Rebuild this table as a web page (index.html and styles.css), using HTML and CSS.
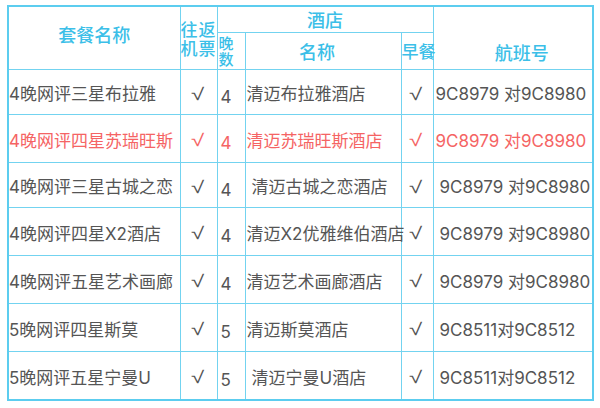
FILE: index.html
```html
<!DOCTYPE html>
<html lang="zh">
<head>
<meta charset="utf-8">
<link rel="stylesheet" href="styles.css">
</head>
<body>
<table class="plan">
  <colgroup>
    <col class="c-name"><col class="c-air"><col class="c-night"><col class="c-hotel"><col class="c-bf"><col class="c-flight">
  </colgroup>
  <thead>
    <tr class="h1">
      <th rowspan="2" class="th-name">套餐名称</th>
      <th rowspan="2" class="th-air">往返<br>机票</th>
      <th colspan="3" class="th-hotel">酒店</th>
      <th rowspan="2" class="th-flight">航班号</th>
    </tr>
    <tr class="h2">
      <th class="th-night">晚<br>数</th>
      <th class="th-hname">名称</th>
      <th class="th-bf">早餐</th>
    </tr>
  </thead>
  <tbody>
    <tr class="r-s">
      <td class="name">4晚网评三星布拉雅</td><td class="ck"><span class="tick">√</span></td><td class="n">4</td><td class="hotel">清迈布拉雅酒店</td><td class="ck"><span class="tick">√</span></td><td class="fl">9C8979 对9C8980</td>
    </tr>
    <tr class="r-t hot">
      <td class="name">4晚网评四星苏瑞旺斯</td><td class="ck"><span class="tick">√</span></td><td class="n">4</td><td class="hotel">清迈苏瑞旺斯酒店</td><td class="ck"><span class="tick">√</span></td><td class="fl">9C8979 对9C8980</td>
    </tr>
    <tr class="r-s">
      <td class="name">4晚网评三星古城之恋</td><td class="ck"><span class="tick">√</span></td><td class="n">4</td><td class="hotel ind">清迈古城之恋酒店</td><td class="ck"><span class="tick">√</span></td><td class="fl ind">9C8979 对9C8980</td>
    </tr>
    <tr class="r-t">
      <td class="name">4晚网评四星X2酒店</td><td class="ck"><span class="tick">√</span></td><td class="n">4</td><td class="hotel">清迈X2优雅维伯酒店</td><td class="ck"><span class="tick">√</span></td><td class="fl ind">9C8979 对9C8980</td>
    </tr>
    <tr class="r-t">
      <td class="name">4晚网评五星艺术画廊</td><td class="ck"><span class="tick">√</span></td><td class="n">4</td><td class="hotel">清迈艺术画廊酒店</td><td class="ck"><span class="tick">√</span></td><td class="fl ind">9C8979 对9C8980</td>
    </tr>
    <tr class="r-t">
      <td class="name">5晚网评四星斯莫</td><td class="ck"><span class="tick">√</span></td><td class="n">5</td><td class="hotel">清迈斯莫酒店</td><td class="ck"><span class="tick">√</span></td><td class="fl ind">9C8511对9C8512</td>
    </tr>
    <tr class="r-l">
      <td class="name">5晚网评五星宁曼U</td><td class="ck"><span class="tick">√</span></td><td class="n">5</td><td class="hotel ind">清迈宁曼U酒店</td><td class="ck"><span class="tick">√</span></td><td class="fl ind">9C8511对9C8512</td>
    </tr>
  </tbody>
</table>
</body>
</html>
```

FILE: styles.css
```css
html, body {
  background: #ffffff;
}
body {
  margin: 5px 0 0 7px;
  font-family: Inter, "Noto Sans CJK SC", sans-serif;
  color: #555555;
}
.plan {
  border-collapse: collapse;
  table-layout: fixed;
  width: 587px;
  border: 2px solid #5ccdef;
}
.c-name { width: 172px; }
.c-air { width: 37px; }
.c-night { width: 28px; }
.c-hotel { width: 156px; }
.c-bf { width: 32px; }
.c-flight { width: 160px; }

.plan th, .plan td {
  border: 1px solid #73d3f0;
  padding: 0;
  white-space: nowrap;
  overflow: visible;
}
.plan th {
  font-family: "Noto Sans CJK SC", sans-serif;
  font-weight: 500;
  color: #3cbfe8;
  font-size: 18px;
  line-height: 18px;
  text-align: center;
  vertical-align: middle;
}
.h1 { height: 26px; }
.h2 { height: 37px; }
.plan .th-name { padding-bottom: 7px; }
.plan .th-air { font-size: 17px; line-height: 19px; letter-spacing: 1px; padding-top: 1px; }
.plan .th-hotel { padding-top: 0; }
.plan .th-night {
  font-size: 15px;
  line-height: 16px;
  text-align: left;
  vertical-align: top;
  padding: 2px 0 0 1px;
}
.plan .th-hname { padding: 0 12px 0 0; }
.plan .th-bf { font-size: 17px; }
.plan .th-flight { vertical-align: bottom; padding: 0 0 8px 18px; }

.plan td {
  font-size: 17px;
  line-height: 20px;
  vertical-align: middle;
  padding-top: 5px;
}
.r-s { height: 45px; }
.r-t { height: 48px; }
.r-l { height: 49px; }

.plan .name { padding-left: 0; text-align: left; }
.plan .ck {
  text-align: center;
  padding-right: 3px;
}
.tick {
  display: inline-block;
  font-family: "Noto Sans", sans-serif;
  font-size: 20px;
  line-height: 20px;
  transform: scale(1.2, 0.85);
}
.plan .n { padding-left: 3px; padding-top: 10px; }
.plan .hotel { padding-left: 1px; }
.plan .hotel.ind { padding-left: 6px; }
.plan .fl { padding-left: 2px; }
.plan .fl.ind { padding-left: 6px; }

.plan .hot td { color: #f56464; }
```
